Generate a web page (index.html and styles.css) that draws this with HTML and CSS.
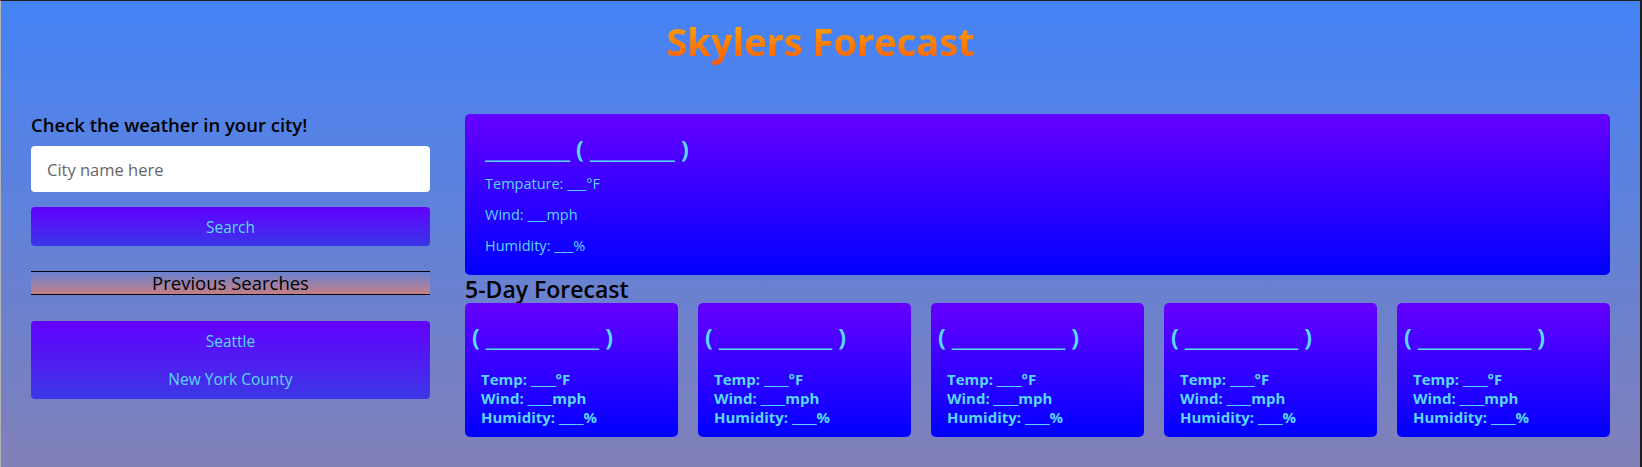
FILE: index.html
```html
<!DOCTYPE html>
<html lang="en">
<head>
<meta charset="utf-8">
<title>Skylers Forecast</title>
<link rel="stylesheet" href="styles.css">
</head>
<body>
<div class="frame">
  <header class="header">
    <h1 class="title">Skylers Forecast</h1>
  </header>
  <main class="layout">
    <aside class="sidebar">
      <h3 class="prompt">Check the weather in your city!</h3>
      <input class="city-input" type="text" placeholder="City name here">
      <button class="search-btn">Search</button>
      <div class="prev-header">Previous Searches</div>
      <div class="prev-list">
        <div class="prev-item">Seattle</div>
        <div class="prev-item">New York County</div>
      </div>
    </aside>
    <section class="content">
      <div class="today">
        <h2 class="today-title">_________ ( _________ )</h2>
        <p class="today-line">Tempature: ___°F</p>
        <p class="today-line">Wind: ___mph</p>
        <p class="today-line">Humidity: ___%</p>
      </div>
      <h2 class="five-title">5-Day Forecast</h2>
      <div class="cards">
        <div class="card">
          <h3 class="card-title">( ____________ )</h3>
          <p class="card-line">Temp: ____°F</p>
          <p class="card-line">Wind: ____mph</p>
          <p class="card-line">Humidity: ____%</p>
        </div>
        <div class="card">
          <h3 class="card-title">( ____________ )</h3>
          <p class="card-line">Temp: ____°F</p>
          <p class="card-line">Wind: ____mph</p>
          <p class="card-line">Humidity: ____%</p>
        </div>
        <div class="card">
          <h3 class="card-title">( ____________ )</h3>
          <p class="card-line">Temp: ____°F</p>
          <p class="card-line">Wind: ____mph</p>
          <p class="card-line">Humidity: ____%</p>
        </div>
        <div class="card">
          <h3 class="card-title">( ____________ )</h3>
          <p class="card-line">Temp: ____°F</p>
          <p class="card-line">Wind: ____mph</p>
          <p class="card-line">Humidity: ____%</p>
        </div>
        <div class="card">
          <h3 class="card-title">( ____________ )</h3>
          <p class="card-line">Temp: ____°F</p>
          <p class="card-line">Wind: ____mph</p>
          <p class="card-line">Humidity: ____%</p>
        </div>
      </div>
    </section>
  </main>
</div>
</body>
</html>
```
FILE: styles.css
```css
html, body {
  margin: 0;
  padding: 0;
  height: 100%;
}

body {
  font-family: "Open Sans", "DejaVu Sans", sans-serif;
  background: #1e1e1e;
}

.frame {
  box-sizing: border-box;
  height: 467px;
  border-top: 1px solid #1e1e1e;
  border-left: 1px solid #b4b4b4;
  border-right: 2px solid #1e1e1e;
  background: linear-gradient(to bottom, #4483f7 0%, #8180b8 100%);
}

.header {
  box-sizing: border-box;
  height: 113px;
  padding-top: 16px;
  text-align: center;
}

.title {
  margin: 0;
  font-size: 38px;
  line-height: 48px;
  font-weight: 700;
  display: inline-block;
  background: linear-gradient(to bottom, #ffae00, #ff5a00);
  -webkit-background-clip: text;
  background-clip: text;
  color: transparent;
}

.layout {
  display: flex;
  gap: 35px;
  padding: 0 30px;
}

.sidebar {
  width: 399px;
  flex: none;
  display: flex;
  flex-direction: column;
}

.prompt {
  margin: 0;
  font-size: 18.5px;
  line-height: 22px;
  font-weight: 600;
  color: #000;
}

.city-input {
  box-sizing: border-box;
  margin-top: 10px;
  height: 46px;
  width: 100%;
  border: none;
  border-radius: 4px;
  background: #fff;
  padding: 0 16px;
  font-family: inherit;
  font-size: 16.5px;
  color: #333;
}

.city-input::placeholder {
  color: #666;
}

.search-btn {
  margin-top: 15px;
  height: 39px;
  width: 100%;
  border: none;
  border-radius: 4px;
  background: linear-gradient(to bottom, #6200fd, #3a36e8);
  color: #58d8f4;
  font-family: inherit;
  font-size: 15.5px;
}

.prev-header {
  box-sizing: border-box;
  margin-top: 25px;
  height: 24px;
  border-top: 1px solid #000;
  border-bottom: 1px solid #000;
  background: linear-gradient(to bottom, rgba(200, 128, 133, 0), #c47f86);
  text-align: center;
  font-size: 18.5px;
  line-height: 22px;
  color: #000;
}

.prev-list {
  margin-top: 26px;
  padding: 1px 0;
  border-radius: 4px;
  background: linear-gradient(to bottom, #6300fe, #3c38e6);
}

.prev-item {
  height: 38px;
  line-height: 38px;
  text-align: center;
  font-size: 15.5px;
  color: #58d8f4;
}

.content {
  flex: 1;
  display: flex;
  flex-direction: column;
}

.today {
  height: 161px;
  box-sizing: border-box;
  padding: 20px 20px 14px;
  border-radius: 5px;
  background: linear-gradient(to bottom, #6600ff, #0000ff);
  color: #58d8f4;
}

.today-title {
  margin: 0 0 4px;
  font-size: 23px;
  line-height: 30px;
  font-weight: 700;
}

.today-line {
  margin: 0;
  font-size: 14.5px;
  line-height: 31px;
}

.five-title {
  margin: 1px 0 1px;
  font-size: 23px;
  line-height: 26px;
  font-weight: 600;
  color: #000;
}

.cards {
  display: flex;
  gap: 20px;
}

.card {
  flex: 1;
  height: 134px;
  box-sizing: border-box;
  padding: 19px 7px 9px;
  border-radius: 5px;
  background: linear-gradient(to bottom, #6600ff, #0000ff);
  color: #58d8f4;
}

.card-title {
  margin: 0 0 18px;
  font-size: 23px;
  line-height: 30px;
  font-weight: 700;
}

.card-line {
  margin: 0;
  padding-left: 9px;
  font-size: 15px;
  line-height: 19px;
  font-weight: 700;
}
```
